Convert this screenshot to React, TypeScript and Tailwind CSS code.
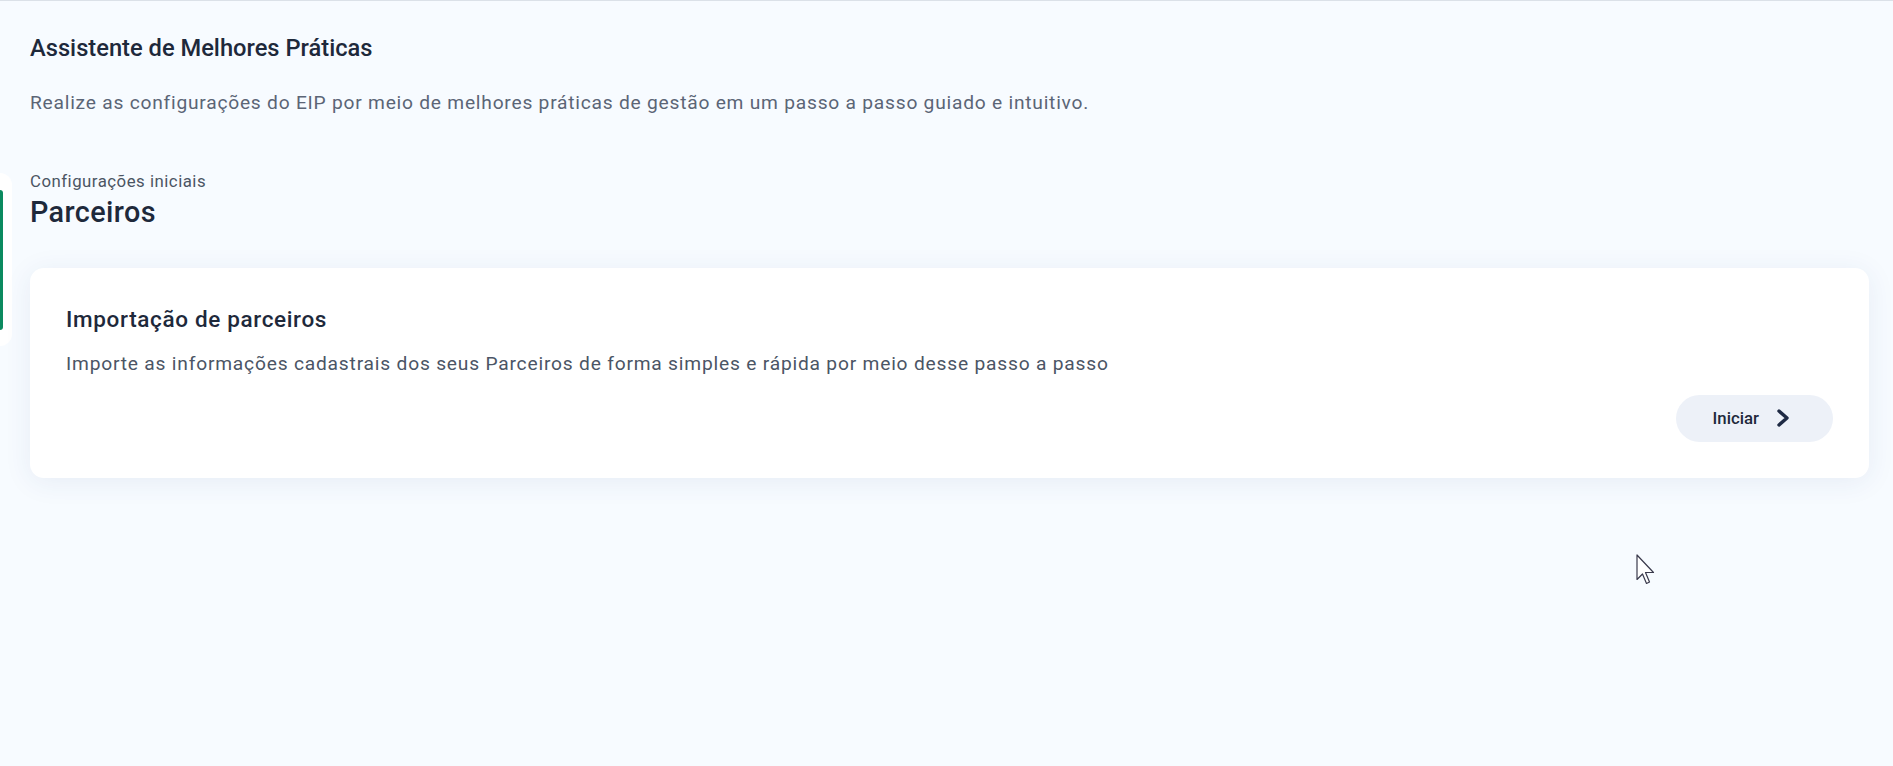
import React from "react";

export default function App() {
  return (
    <div
      className="relative h-[766px] w-full overflow-hidden border-t border-[#dbe1e8] bg-[#f7fbff]"
      style={{ fontFamily: "Roboto, 'Noto Sans', Arial, sans-serif" }}
    >
      <div className="flex">
        {/* partially visible side panel */}
        <div className="mt-[172px] h-[173px] w-[12px] shrink-0 rounded-r-[12px] bg-white pt-[17px]">
          <div className="h-[140px] w-[3px] rounded-r-[3px] bg-[#0b8a5f]" />
        </div>

        <main className="flex min-w-0 flex-1 flex-col pl-[18px] pr-[24px] pt-[33px]">
          <h1 className="text-[23.7px] font-medium leading-[28.8px] text-[#1e293b]">
            Assistente de Melhores Práticas
          </h1>
          <p className="mt-[26px] text-[19.2px] leading-[28.8px] tracking-[0.77px] text-[#5b6576]">
            Realize as configurações do EIP por meio de melhores práticas de gestão em um passo a passo guiado e intuitivo.
          </p>

          <div className="mt-[52px] text-[16.8px] leading-[23.5px] tracking-[0.5px] text-[#4b5563]">
            Configurações iniciais
          </div>
          <h2 className="mt-[2px] text-[28.8px] font-medium leading-[34.6px] tracking-[0.4px] text-[#1e293b]">
            Parceiros
          </h2>

          <section className="mt-[38px] flex flex-col rounded-[14px] bg-white p-[36px] shadow-[0_4px_28px_rgba(40,70,130,0.08)]">
            <h3 className="text-[22.5px] font-medium leading-[30.2px] tracking-[0.65px] text-[#1e293b]">
              Importação de parceiros
            </h3>
            <p className="mt-[16px] text-[19.2px] leading-[28.8px] tracking-[0.8px] text-[#4b5565]">
              Importe as informações cadastrais dos seus Parceiros de forma simples e rápida por meio desse passo a passo
            </p>
            <div className="mt-[16px] flex justify-end">
              <button className="flex h-[47px] items-center gap-[17px] rounded-full bg-[#edf1f8] pl-[37px] pr-[43px] text-[16.8px] font-medium text-[#1e293b]">
                <span>Iniciar</span>
                <svg width="14" height="18" viewBox="0 0 14 18" fill="none">
                  <polyline
                    points="3,2 11,9 3,16"
                    stroke="#1e2a44"
                    strokeWidth="3.4"
                    strokeLinecap="round"
                    strokeLinejoin="round"
                  />
                </svg>
              </button>
            </div>
          </section>
        </main>
      </div>

      {/* mouse pointer */}
      <svg
        className="absolute left-[1636px] top-[553px]"
        width="20"
        height="32"
        viewBox="0 0 20 32"
        fill="none"
      >
        <path
          d="M1 1 L1 25.5 L6.5 20 L10.5 29.5 L13.5 28 L9.5 18.5 L17.5 18.5 Z"
          fill="#ffffff"
          stroke="#3a3a4c"
          strokeWidth="1.2"
          strokeLinejoin="round"
        />
      </svg>
    </div>
  );
}
